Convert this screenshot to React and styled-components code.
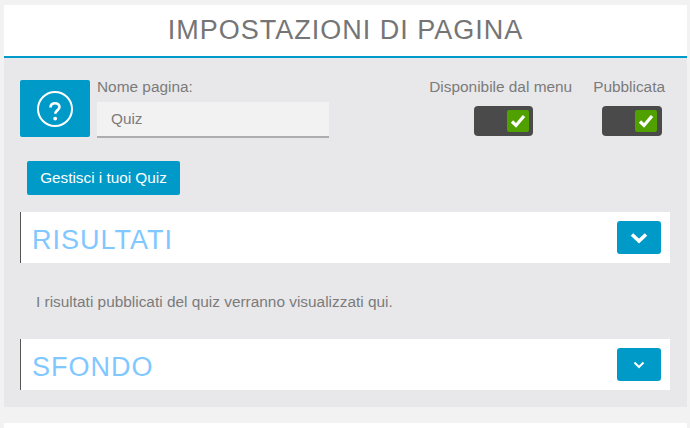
import React from 'react'
import styled, { createGlobalStyle } from 'styled-components'

const Global = createGlobalStyle`
  html, body {
    margin: 0;
    padding: 0;
    background: #f2f2f2;
    font-family: "Liberation Sans", Arial, sans-serif;
    overflow: hidden;
  }
  * { box-sizing: border-box; }
`

const Page = styled.div`
  width: 690px;
  height: 428px;
  padding: 5px 3px 0 4px;
`

const Header = styled.header`
  height: 53px;
  background: #fff;
  border-bottom: 2px solid #009ac9;
  display: flex;
  align-items: center;
  justify-content: center;
  padding-bottom: 1px;
`

const Title = styled.h1`
  margin: 0;
  font-size: 27px;
  font-weight: 400;
  letter-spacing: 1px;
  color: #757575;
`

const Panel = styled.main`
  height: 349px;
  background: #e8e8ea;
  padding: 22px 17px 0 16px;
`

const TopRow = styled.div`
  display: flex;
  height: 58px;
`

const IconBox = styled.div`
  width: 70px;
  height: 57px;
  background: #009ac9;
  border-radius: 2px;
  display: flex;
  align-items: center;
  justify-content: center;
`

const NameField = styled.div`
  margin-left: 7px;
  width: 232px;
  display: flex;
  flex-direction: column;
`

const Label = styled.label`
  font-size: 15.4px;
  line-height: 14px;
  color: #7b7b7b;
`

const Input = styled.div`
  margin-top: 8px;
  height: 36px;
  background: #f2f2f2;
  border-bottom: 2px solid #adadad;
  padding: 0 14px;
  font-size: 15.3px;
  line-height: 33px;
  color: #7b7b7b;
`

const Toggles = styled.div`
  margin-left: auto;
  display: flex;
  gap: 21px;
  padding-right: 5px;
`

const ToggleField = styled.div`
  display: flex;
  flex-direction: column;
  align-items: flex-end;
`

const Switch = styled.div`
  margin: 12px ${(props) => props.$inset}px 0 0;
  width: ${(props) => props.$width}px;
  height: 30px;
  background: #4a4a4a;
  border-radius: 4px;
  display: flex;
  align-items: center;
  justify-content: flex-end;
  padding-right: ${(props) => props.$pad}px;
`

const Knob = styled.span`
  width: 22px;
  height: 22px;
  background: #50a000;
  border-radius: 2px;
  display: flex;
  align-items: center;
  justify-content: center;
`

const ManageButton = styled.button`
  display: block;
  margin: 23px 0 17px 7px;
  width: 153px;
  height: 34px;
  padding: 0;
  border: 0;
  border-radius: 2px;
  background: #009ac9;
  color: #fff;
  font-family: inherit;
  font-size: 15.3px;
`

const Section = styled.section`
  width: 650px;
  height: 51px;
  background: #fff;
  border-left: 1px solid #555;
  display: flex;
  align-items: center;
  justify-content: space-between;
  padding: 0 9px 0 11px;
`

const SectionTitle = styled.h2`
  margin: 0;
  font-size: 27px;
  font-weight: 400;
  letter-spacing: 1px;
  color: #80c8ff;
  padding-top: 6px;
`

const Chevron = styled.button`
  width: 44px;
  height: 33px;
  padding: 0;
  border: 0;
  border-radius: 3px;
  background: #009ac9;
  display: flex;
  align-items: center;
  justify-content: center;
`

const Note = styled.p`
  margin: 0;
  height: 76px;
  padding-left: 16px;
  font-size: 15.4px;
  line-height: 78px;
  color: #7b7b7b;
`

const NextCard = styled.div`
  margin-top: 16px;
  height: 10px;
  background: #fff;
`

const QuestionIcon = () => (
  <svg width="36" height="36" viewBox="0 0 36 36" fill="none" stroke="#fff">
    <circle cx="18" cy="18" r="17" strokeWidth="2" />
    <path d="M13.500 16.500c0-2.800 2-4.300 4.500-4.300s4.500 1.500 4.500 3.900c0 3.300-4.300 3.300-4.300 6.600" strokeWidth="2.600" />
    <circle cx="18.200" cy="27.600" r="1.900" fill="#fff" stroke="none" />
  </svg>
)

const CheckIcon = () => (
  <svg width="16" height="14" viewBox="0 0 16 14" fill="none" stroke="#fff" strokeWidth="3.200">
    <path d="M2 7.500 6 11.500 14 2" />
  </svg>
)

const ChevronIcon = ({ small }) => (
  small ? (
    <svg width="12" height="8" viewBox="0 0 12 8" fill="none" stroke="#fff" strokeWidth="2">
      <path d="M1.500 1.500 6 6 10.500 1.500" />
    </svg>
  ) : (
    <svg width="18" height="12" viewBox="0 0 18 12" fill="none" stroke="#fff" strokeWidth="3.600">
      <path d="M2 2.500 9 9 16 2.500" />
    </svg>
  )
)

export default function App() {
  return (
    <Page>
      <Global />
      <Header>
        <Title>IMPOSTAZIONI DI PAGINA</Title>
      </Header>
      <Panel>
        <TopRow>
          <IconBox>
            <QuestionIcon />
          </IconBox>
          <NameField>
            <Label>Nome pagina:</Label>
            <Input>Quiz</Input>
          </NameField>
          <Toggles>
            <ToggleField>
              <Label>Disponibile dal menu</Label>
              <Switch $width={59} $inset={39} $pad={4}>
                <Knob><CheckIcon /></Knob>
              </Switch>
            </ToggleField>
            <ToggleField>
              <Label>Pubblicata</Label>
              <Switch $width={60} $inset={3} $pad={5}>
                <Knob><CheckIcon /></Knob>
              </Switch>
            </ToggleField>
          </Toggles>
        </TopRow>
        <ManageButton>Gestisci i tuoi Quiz</ManageButton>
        <Section>
          <SectionTitle>RISULTATI</SectionTitle>
          <Chevron><ChevronIcon /></Chevron>
        </Section>
        <Note>I risultati pubblicati del quiz verranno visualizzati qui.</Note>
        <Section>
          <SectionTitle>SFONDO</SectionTitle>
          <Chevron><ChevronIcon small /></Chevron>
        </Section>
      </Panel>
      <NextCard />
    </Page>
  )
}
